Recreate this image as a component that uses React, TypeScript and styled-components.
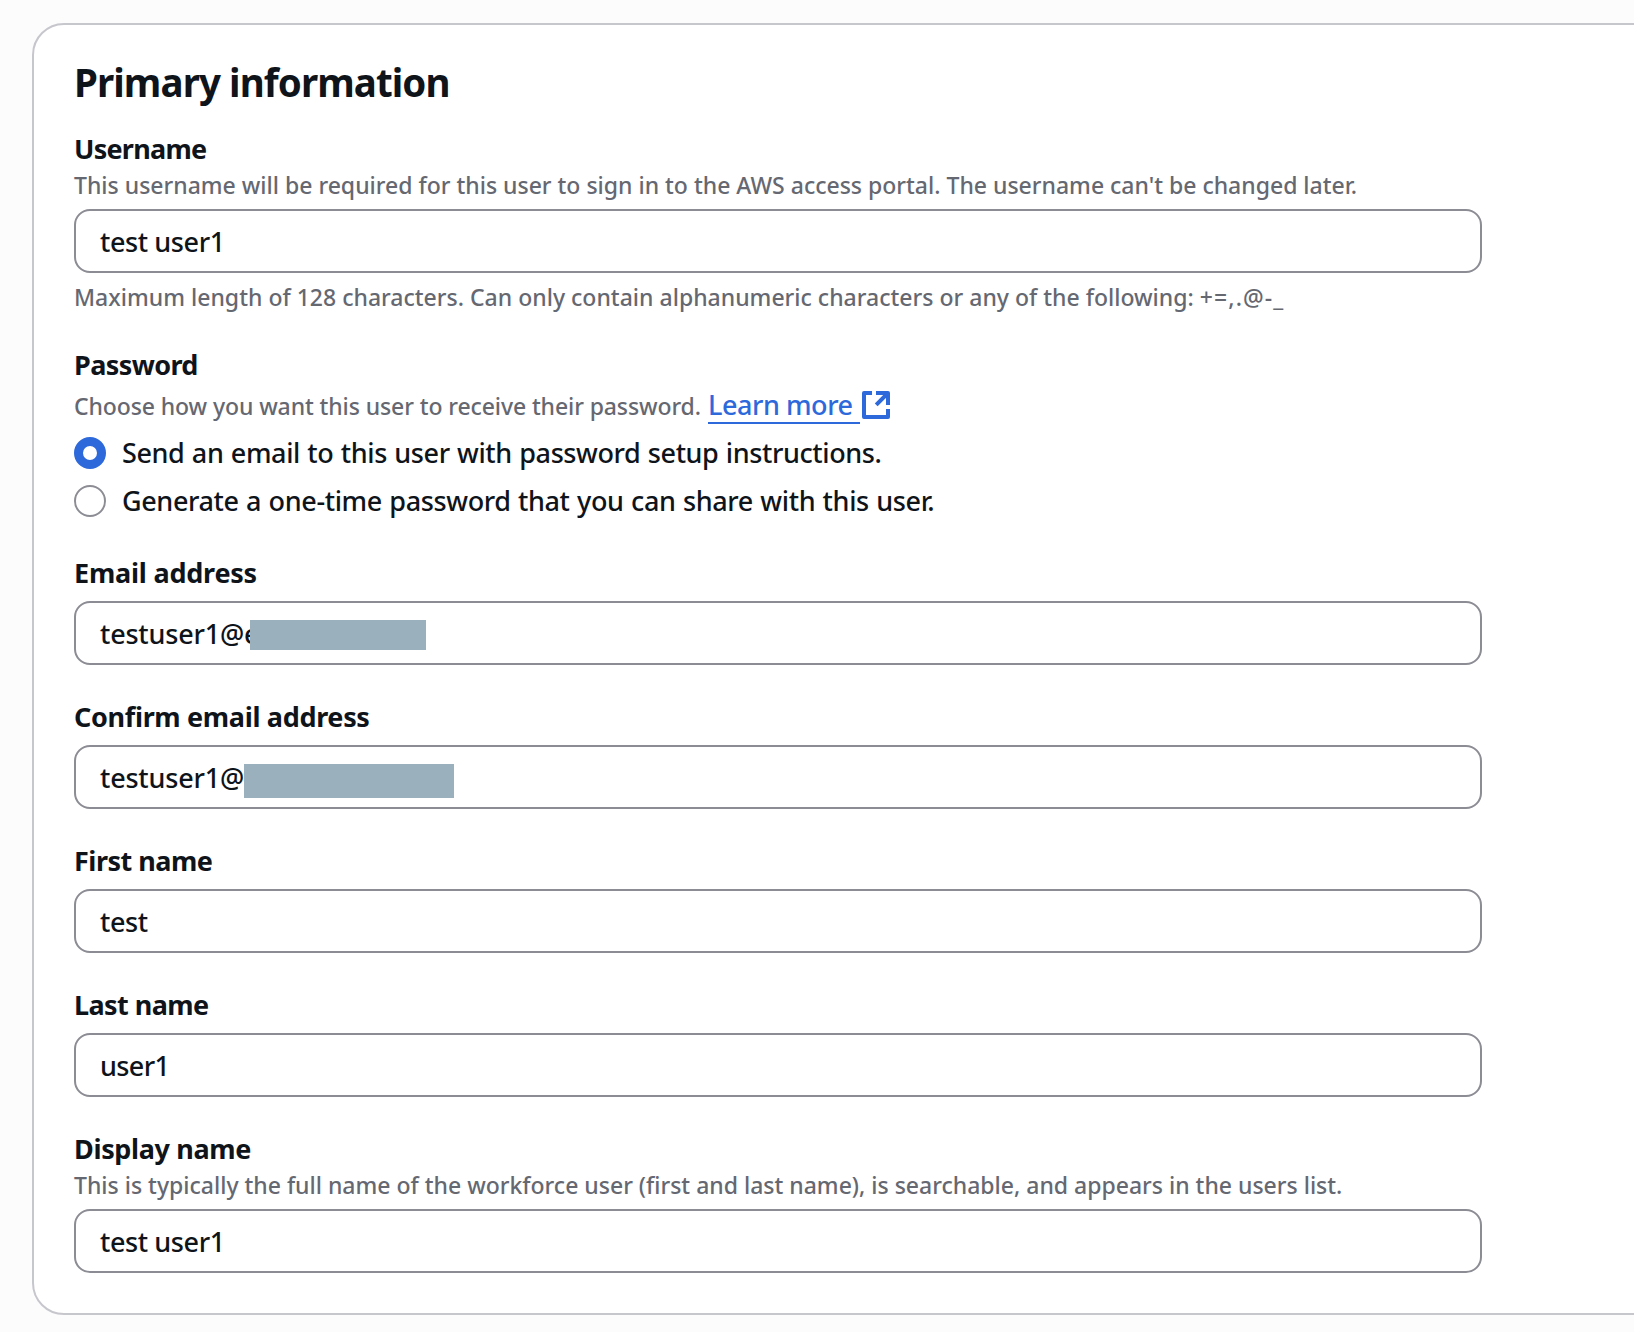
import React from 'react';
import styled, { createGlobalStyle } from 'styled-components';

const color = {
  page: '#fcfcfd',
  surface: '#ffffff',
  cardBorder: '#c6c6cd',
  fieldBorder: '#8c8c94',
  text: '#0f141a',
  muted: '#656871',
  accent: '#2d69db',
  mask: '#9bb0bd',
};

const GlobalStyle = createGlobalStyle`
  *, *::before, *::after { box-sizing: border-box; }
  html, body { margin: 0; background: ${color.page}; }
  body {
    height: 1332px;
    overflow: hidden;
    color: ${color.text};
    font-family: "Noto Sans", "Open Sans", sans-serif;
    font-size: 27px;
    font-weight: 500;
    line-height: 40px;
  }
`;

const Page = styled.main`
  padding: 23px 0 17px 32px;
  overflow: hidden;
`;

const Card = styled.section`
  width: 1700px;
  height: 1292px;
  padding: 33px 40px 40px;
  border: 2px solid ${color.cardBorder};
  border-radius: 32px;
  background: ${color.surface};
`;

const Title = styled.h1`
  margin: 0 0 23px;
  font-size: 38.5px;
  font-weight: 700;
  line-height: 48px;
  letter-spacing: -0.92px;
`;

const Form = styled.form`
  display: flex;
  flex-direction: column;
  gap: 32px;
  width: 1408px;
`;

const Field = styled.div`
  display: flex;
  flex-direction: column;
`;

const Label = styled.label<{ $track: number }>`
  display: block;
  height: 40px;
  font-weight: 700;
  line-height: 40px;
  letter-spacing: ${p => p.$track}px;
  white-space: nowrap;
`;

const Hint = styled.div<{ $track: number }>`
  color: ${color.muted};
  font-size: 23px;
  line-height: 32px;
  letter-spacing: ${p => p.$track}px;
  white-space: nowrap;
`;

const Constraint = styled(Hint)`
  margin-top: 8px;
`;

const Symbols = styled.span`
  letter-spacing: 1.1px;
`;

const Control = styled.div`
  position: relative;
  margin-top: 8px;
  height: 64px;
`;

const TextInput = styled.input<{ $track: number }>`
  display: block;
  width: 100%;
  height: 64px;
  padding: 0 24px;
  border: 2px solid ${color.fieldBorder};
  border-radius: 16px;
  outline: none;
  background: ${color.surface};
  color: inherit;
  font: inherit;
  letter-spacing: ${p => p.$track}px;
`;

const Mask = styled.span<{ $left: number; $width: number; $height: number }>`
  position: absolute;
  top: 19px;
  left: ${p => p.$left}px;
  width: ${p => p.$width}px;
  height: ${p => p.$height}px;
  background: ${color.mask};
`;

const HintLine = styled.div`
  display: flex;
  align-items: baseline;
  height: 40px;
  padding-top: 4px;
`;

const LearnMore = styled.a`
  display: inline-flex;
  align-items: baseline;
  margin-left: 7px;
  color: ${color.accent};
  text-decoration: none;
`;

const LinkText = styled.span`
  width: 152px;
  height: 35px;
  border-bottom: 2px solid ${color.accent};
  line-height: 32px;
  letter-spacing: -0.45px;
  white-space: nowrap;
`;

const ExternalIcon = styled.svg`
  align-self: flex-start;
  width: 32px;
  height: 32px;
`;

const RadioGroup = styled.div`
  display: flex;
  flex-direction: column;
  gap: 8px;
  margin-top: 8px;
`;

const Option = styled.label<{ $track: number }>`
  display: flex;
  align-items: center;
  gap: 16px;
  height: 40px;
  letter-spacing: ${p => p.$track}px;
  word-spacing: 0.8px;
  white-space: nowrap;
`;

const Radio = styled.input`
  appearance: none;
  flex: none;
  width: 32px;
  height: 32px;
  margin: 0;
  border: 2px solid ${color.fieldBorder};
  border-radius: 50%;
  background: ${color.surface};

  &:checked {
    border: 9.5px solid ${color.accent};
  }
`;

interface TextFieldProps {
  id: string;
  label: string;
  labelTrack: number;
  value: string;
  valueTrack: number;
  hint?: string;
  constraint?: React.ReactNode;
  mask?: { left: number; width: number; height: number };
}

function TextField({ id, label, labelTrack, value, valueTrack, hint, constraint, mask }: TextFieldProps) {
  return (
    <Field>
      <Label htmlFor={id} $track={labelTrack}>{label}</Label>
      {hint && <Hint $track={0}>{hint}</Hint>}
      <Control>
        <TextInput id={id} defaultValue={value} $track={valueTrack} spellCheck={false} autoComplete="off" />
        {mask && <Mask $left={mask.left} $width={mask.width} $height={mask.height} />}
      </Control>
      {constraint && <Constraint $track={0.01}>{constraint}</Constraint>}
    </Field>
  );
}

export default function App() {
  return (
    <>
      <GlobalStyle />
      <Page>
        <Card>
          <Title>Primary information</Title>
          <Form>
            <TextField
              id="username"
              label="Username"
              labelTrack={-0.75}
              value="test user1"
              valueTrack={-0.4}
              hint="This username will be required for this user to sign in to the AWS access portal. The username can't be changed later."
              constraint={
                <>
                  Maximum length of 128 characters. Can only contain alphanumeric characters or any of the following:{' '}
                  <Symbols>+=,.@-_</Symbols>
                </>
              }
            />
            <Field>
              <Label as="div" $track={-0.6}>Password</Label>
              <HintLine>
                <Hint $track={-0.1}>Choose how you want this user to receive their password.</Hint>
                <LearnMore href="#">
                  <LinkText>Learn more</LinkText>
                  <ExternalIcon viewBox="0 0 16 16" fill="none" stroke="currentColor" strokeWidth="2">
                    <path d="M6 2H2v12h12v-4" strokeLinejoin="round" />
                    <path d="M8 2h6v6" strokeLinejoin="round" />
                    <path d="M14 2 8.1 7.9" />
                  </ExternalIcon>
                </LearnMore>
              </HintLine>
              <RadioGroup>
                <Option $track={-0.4}>
                  <Radio type="radio" name="delivery" defaultChecked />
                  <span>Send an email to this user with password setup instructions.</span>
                </Option>
                <Option $track={-0.38}>
                  <Radio type="radio" name="delivery" />
                  <span>Generate a one-time password that you can share with this user.</span>
                </Option>
              </RadioGroup>
            </Field>
            <TextField id="email" label="Email address" labelTrack={-0.22} value="testuser1@e" valueTrack={-0.2} mask={{ left: 176, width: 176, height: 30 }} />
            <TextField id="confirm" label="Confirm email address" labelTrack={-0.33} value="testuser1@" valueTrack={-0.2} mask={{ left: 170, width: 210, height: 34 }} />
            <TextField id="first" label="First name" labelTrack={-0.5} value="test" valueTrack={-0.4} />
            <TextField id="last" label="Last name" labelTrack={-0.58} value="user1" valueTrack={-0.6} />
            <TextField
              id="display"
              label="Display name"
              labelTrack={-0.35}
              value="test user1"
              valueTrack={-0.4}
              hint="This is typically the full name of the workforce user (first and last name), is searchable, and appears in the users list."
            />
          </Form>
        </Card>
      </Page>
    </>
  );
}
